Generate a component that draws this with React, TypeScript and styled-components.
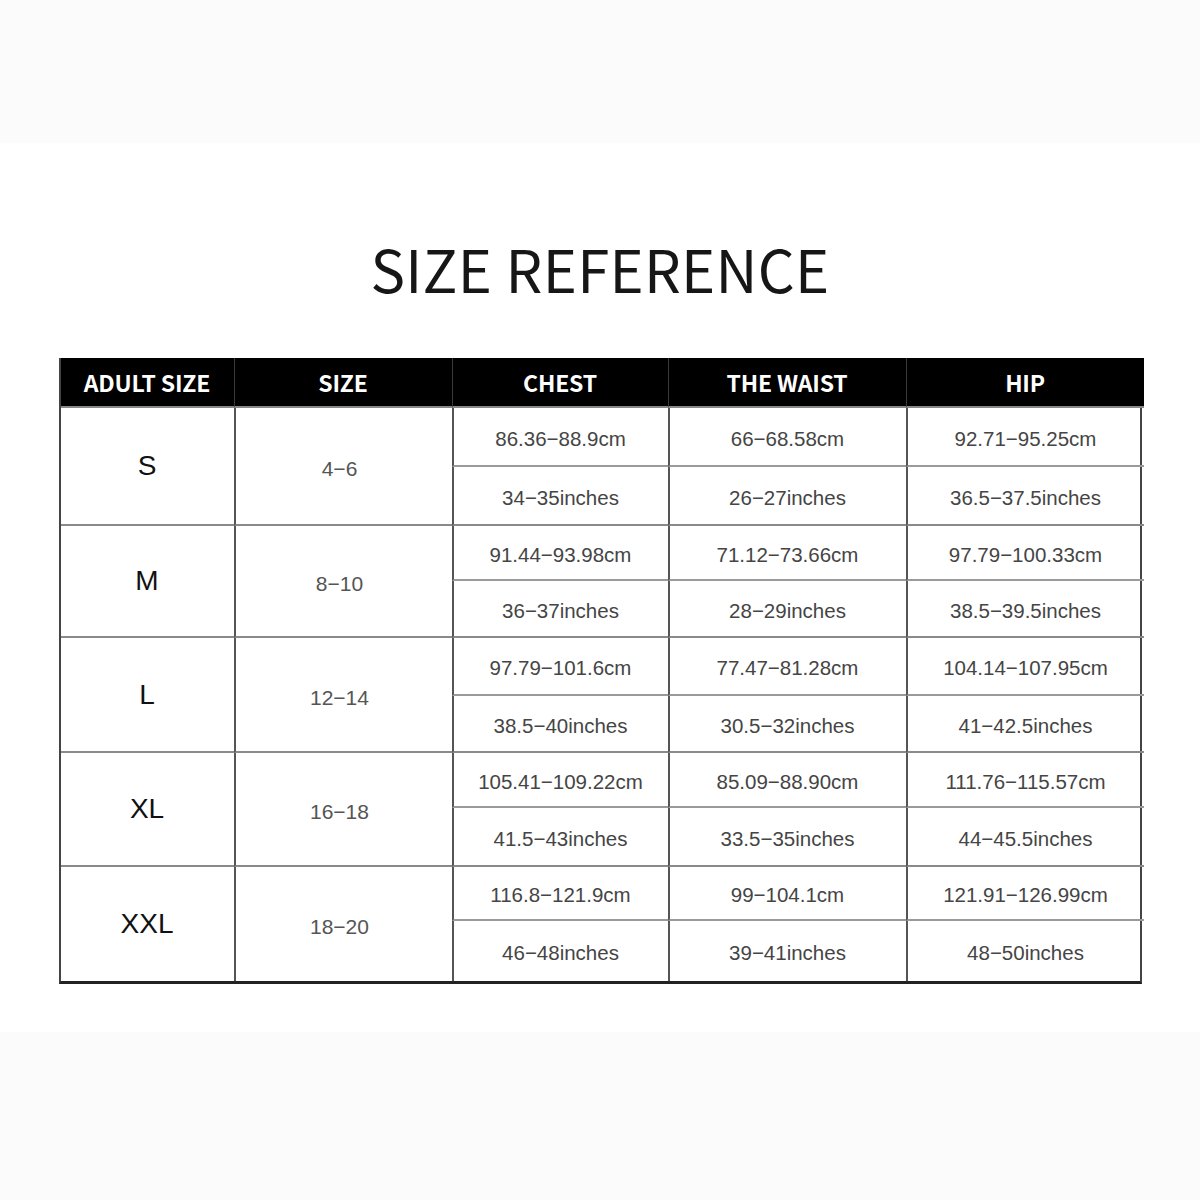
import styled, { createGlobalStyle } from 'styled-components'

const GlobalStyle = createGlobalStyle`
  html, body {
    margin: 0;
    padding: 0;
    background: #ffffff;
  }
`

interface SizeRow {
  adult: string
  size: string
  chest: [string, string]
  waist: [string, string]
  hip: [string, string]
  heights: [number, number]
}

const ROWS: SizeRow[] = [
  {
    adult: 'S',
    size: '4−6',
    chest: ['86.36−88.9cm', '34−35inches'],
    waist: ['66−68.58cm', '26−27inches'],
    hip: ['92.71−95.25cm', '36.5−37.5inches'],
    heights: [59, 59]
  },
  {
    adult: 'M',
    size: '8−10',
    chest: ['91.44−93.98cm', '36−37inches'],
    waist: ['71.12−73.66cm', '28−29inches'],
    hip: ['97.79−100.33cm', '38.5−39.5inches'],
    heights: [55, 57]
  },
  {
    adult: 'L',
    size: '12−14',
    chest: ['97.79−101.6cm', '38.5−40inches'],
    waist: ['77.47−81.28cm', '30.5−32inches'],
    hip: ['104.14−107.95cm', '41−42.5inches'],
    heights: [58, 57]
  },
  {
    adult: 'XL',
    size: '16−18',
    chest: ['105.41−109.22cm', '41.5−43inches'],
    waist: ['85.09−88.90cm', '33.5−35inches'],
    hip: ['111.76−115.57cm', '44−45.5inches'],
    heights: [55, 59]
  },
  {
    adult: 'XXL',
    size: '18−20',
    chest: ['116.8−121.9cm', '46−48inches'],
    waist: ['99−104.1cm', '39−41inches'],
    hip: ['121.91−126.99cm', '48−50inches'],
    heights: [54, 60]
  }
]

const HEADERS = ['ADULT SIZE', 'SIZE', 'CHEST', 'THE WAIST', 'HIP']

const Page = styled.div`
  width: 1200px;
  height: 1200px;
  display: flex;
  flex-direction: column;
  background: #ffffff;
`

const Band = styled.div<{ $h: number }>`
  height: ${p => p.$h}px;
  flex: 0 0 auto;
  background: #fbfbfb;
`

const Main = styled.div`
  flex: 1;
  display: flex;
  flex-direction: column;
  align-items: center;
  padding-top: 92px;
`

const Title = styled.h1`
  margin: 0;
  height: 123px;
  font-family: 'Noto Sans CJK SC', 'Noto Sans', sans-serif;
  font-weight: 400;
  font-size: 58px;
  line-height: 66px;
  color: #161616;
  letter-spacing: 0.3px;
`

const Table = styled.div<{ $rows: string }>`
  width: 1083px;
  display: grid;
  grid-template-columns: 173px 218px 216px 238px 238px;
  grid-template-rows: ${p => p.$rows};
  border-left: 2px solid #444;
  border-right: 2px solid #444;
  border-bottom: 3px solid #222;
  box-sizing: border-box;
`

const HeadCell = styled.div<{ $first?: boolean }>`
  background: #000000;
  color: #ffffff;
  display: flex;
  align-items: center;
  justify-content: center;
  font-family: 'Noto Sans CJK SC', 'Noto Sans', sans-serif;
  font-weight: 700;
  font-size: 23px;
  letter-spacing: -0.2px;
  border-left: ${p => (p.$first ? 'none' : '1px solid #3a3a3a')};
  border-bottom: 2px solid #888;
`

const SpanCell = styled.div<{ $span: number; $first?: boolean; $dark?: boolean; $last?: boolean }>`
  grid-row: span ${p => p.$span};
  display: flex;
  align-items: center;
  justify-content: center;
  font-family: 'Liberation Sans', Arial, sans-serif;
  font-size: ${p => (p.$dark ? '28px' : '21px')};
  color: ${p => (p.$dark ? '#111' : '#555')};
  border-left: ${p => (p.$first ? 'none' : '2px solid #555')};
  border-bottom: ${p => (p.$last ? 'none' : '2px solid #8a8a8a')};
  padding-top: ${p => (p.$dark ? '0' : '6px')};
  padding-right: ${p => (p.$dark ? '0' : '8px')};
`

const ValueCell = styled.div<{ $bottom: 'sub' | 'group' | 'none' }>`
  display: flex;
  align-items: center;
  justify-content: center;
  padding-top: 4px;
  font-family: 'Liberation Sans', Arial, sans-serif;
  font-size: 20.5px;
  color: #454545;
  border-left: 2px solid #555;
  border-bottom: ${p =>
    p.$bottom === 'sub' ? '2px solid #9a9a9a' : p.$bottom === 'group' ? '2px solid #8a8a8a' : 'none'};
`

export default function App() {
  const rowHeights = ['50px', ...ROWS.flatMap(r => r.heights.map(h => `${h}px`))].join(' ')

  return (
    <Page>
      <GlobalStyle />
      <Band $h={143} />
      <Main>
        <Title>SIZE REFERENCE</Title>
        <Table $rows={rowHeights}>
          {HEADERS.map((h, i) => (
            <HeadCell key={h} $first={i === 0}>
              {h}
            </HeadCell>
          ))}
          {ROWS.map((r, gi) => {
            const last = gi === ROWS.length - 1
            return [0, 1].map(sub => {
              const bottom = sub === 0 ? 'sub' : last ? 'none' : 'group'
              return (
                <>
                  {sub === 0 && (
                    <>
                      <SpanCell $span={2} $first $dark $last={last}>
                        {r.adult}
                      </SpanCell>
                      <SpanCell $span={2} $last={last}>
                        {r.size}
                      </SpanCell>
                    </>
                  )}
                  <ValueCell $bottom={bottom}>{r.chest[sub]}</ValueCell>
                  <ValueCell $bottom={bottom}>{r.waist[sub]}</ValueCell>
                  <ValueCell $bottom={bottom}>{r.hip[sub]}</ValueCell>
                </>
              )
            })
          })}
        </Table>
      </Main>
      <Band $h={168} />
    </Page>
  )
}
